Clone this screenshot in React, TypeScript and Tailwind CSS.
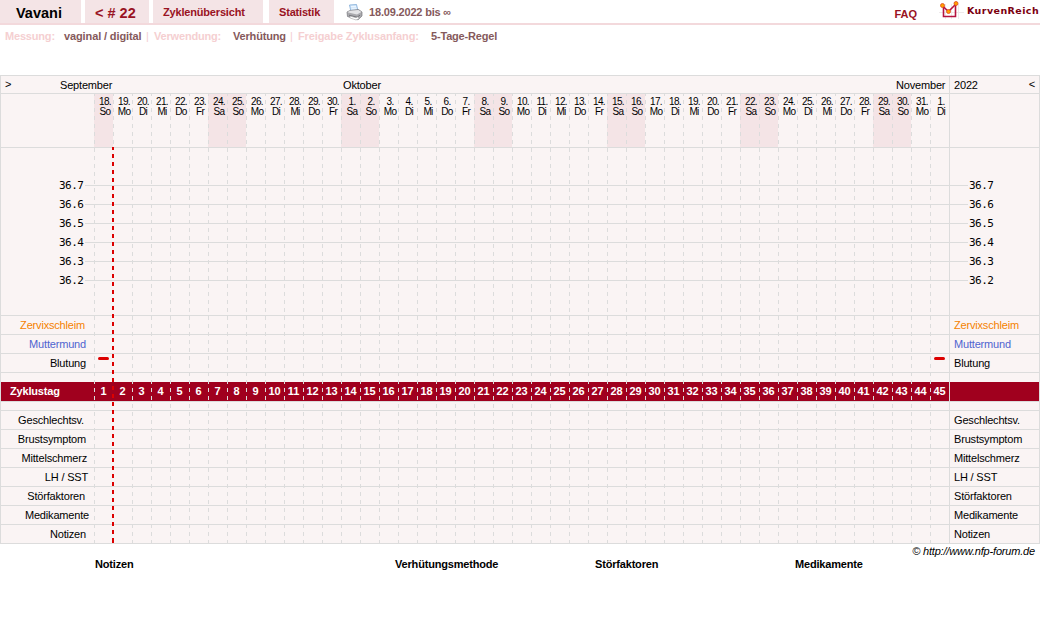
import React from "react";

const days: [string, string][] = [];
const names = ["So", "Mo", "Di", "Mi", "Do", "Fr", "Sa"];
for (let i = 0; i < 45; i++) {
  const d = i < 13 ? 18 + i : i < 44 ? i - 12 : 1;
  days.push([d + ".", names[i % 7]]);
}

const dash = "bg-[linear-gradient(to_bottom,#dcdcdc_4px,transparent_4px)] bg-[length:1px_8px] bg-repeat-y";

type Label = { text: string; right: string; phase: string; color?: string };

// The second column starts at the temperature shift line, so it has no grey divider.
function Cells({ phase }: { phase: string }) {
  return (
    <>
      {days.map((_, i) => (
        <div key={i} className={`w-[19px] shrink-0 ${i === 1 ? "" : dash} ${phase}`} />
      ))}
    </>
  );
}

function Row({ label }: { label: Label }) {
  const bleed = label.text === "Blutung";
  return (
    <div className="flex h-[19px] border-b border-[#dcdcdc]">
      <div className={`w-[93px] shrink-0 text-right leading-[19px] ${label.right} ${label.color ?? ""}`}>{label.text}</div>
      {days.map((_, i) => (
        <div key={i} className={`w-[19px] shrink-0 pl-1 pt-[3px] ${i === 1 ? "" : dash} ${label.phase}`}>
          {bleed && (i === 0 || i === 44) && <div className="h-[3px] w-[11px] rounded-[2px] bg-[#dc0000]" />}
        </div>
      ))}
      <div className={`w-[90px] border-l border-[#dcdcdc] pl-1 leading-[19px] ${label.color ?? ""}`}>{label.text}</div>
    </div>
  );
}

const symptoms: Label[] = [
  { text: "Zervixschleim", right: "pr-[9px]", color: "text-[#f58200]", phase: "bg-[position:0_0px]" },
  { text: "Muttermund", right: "pr-[8px]", color: "text-[#5064d0]", phase: "bg-[position:0_5px]" },
  { text: "Blutung", right: "pr-[8px]", phase: "bg-[position:0_2px]" },
];
const lower: Label[] = [
  { text: "Geschlechtsv.", right: "pr-[10px]", phase: "bg-[position:0_1px]" },
  { text: "Brustsymptom", right: "pr-[8px]", phase: "bg-[position:0_6px]" },
  { text: "Mittelschmerz", right: "pr-[7px]", phase: "bg-[position:0_3px]" },
  { text: "LH / SST", right: "pr-[6px]", phase: "bg-[position:0_0px]" },
  { text: "Störfaktoren", right: "pr-[9px]", phase: "bg-[position:0_5px]" },
  { text: "Medikamente", right: "pr-[5px]", phase: "bg-[position:0_2px]" },
  { text: "Notizen", right: "pr-[8px]", phase: "bg-[position:0_7px]" },
];
const temps = ["36.7", "36.6", "36.5", "36.4", "36.3", "36.2"];

function Printer() {
  return (
    <svg className="ml-[12px] mt-1 h-[17px] w-[17px] shrink-0" viewBox="0 0 17 17">
      <path d="M3.500 1 10.500 0.500 12 7 5 8Z" fill="#d3e8fb" stroke="#7fa9d6" strokeWidth=".8" />
      <path d="M5 2.500h5M5.500 4.300h5" stroke="#edf6ff" />
      <path d="M1 8 4 6.500 12.500 5.500 16 8v4l-4 3.800L1.500 12.500Z" fill="#a9a9ad" stroke="#77777c" strokeWidth=".7" />
      <path d="M1.300 8.200 4 6.800 12.300 6 15.400 8 11 10.500Z" fill="#e4e4e6" />
      <path d="m3 11.200 8 2 3-2" fill="none" stroke="#66666a" strokeWidth=".8" />
      <path d="m4 12 6 1.700 2-1 1 2-3 1.300-6-2Z" fill="#fff" stroke="#999" strokeWidth=".5" />
    </svg>
  );
}

function Logo() {
  return (
    <svg className="h-[20px] w-[25px] shrink-0" viewBox="0 0 25 20">
      <path d="M0 12.500h25M6.500 4v15M12.500 4v15M19.500 4v15" stroke="#eeeaeb" />
      <path d="M4.500 6v10.500h12V5" fill="none" stroke="#b5123f" strokeWidth="1.600" />
      <path d="m3.500 6 6 5.500L17 4" fill="none" stroke="#b5123f" strokeWidth="1.600" />
      <circle cx="3.500" cy="5.500" r="2" fill="#ffa000" stroke="#e0481a" strokeWidth=".8" />
      <circle cx="9.500" cy="11.500" r="2" fill="#ffa000" stroke="#e0481a" strokeWidth=".8" />
      <circle cx="17" cy="3.500" r="2" fill="#ffa000" stroke="#e0481a" strokeWidth=".8" />
    </svg>
  );
}

export default function App() {
  return (
    <div className="h-[623px] w-[1040px] overflow-hidden whitespace-nowrap bg-white font-['Liberation_Sans',Arial,sans-serif] text-[11px] tracking-[-0.18px] text-black">
      <header className="flex h-[25px] border-b-2 border-[#f3d9dc] font-bold text-[#991323]">
        <div className="h-[23px] w-[81px] bg-[#f4e4e6] pl-4 text-[14.5px] leading-[26px] tracking-normal text-black">Vavani</div>
        <div className="ml-1 h-[23px] w-16 bg-[#f4e4e6] pl-[10px] text-[14.5px] leading-[26px] tracking-normal">&lt; # 22</div>
        <div className="ml-1 h-[23px] w-[110px] bg-[#f4e4e6] pl-[10px] leading-[25px]">Zyklenübersicht</div>
        <div className="ml-[6px] h-[23px] w-[65px] bg-[#f4e4e6] pl-[10px] leading-[25px]">Statistik</div>
        <Printer />
        <div className="ml-[6px] leading-[25px] tracking-[-0.18px] text-[#85595b]">18.09.2022 bis ∞</div>
        <div className="ml-auto mr-[22px] leading-[28px] tracking-normal">FAQ</div>
        <Logo />
        <div className="ml-[3px] w-[73px] font-['DejaVu_Sans',sans-serif] text-[9.5px] leading-[21px] tracking-[0.42px] text-[#7b0010]">KurvenReich</div>
      </header>
      <div className="flex h-[50px] pl-[5px] pt-[5px] font-bold leading-[13px] text-[#f5cfd1]">
        <span className="w-[59px]">Messung:</span>
        <span className="w-[82px] tracking-[-0.12px] text-[#85595b]">vaginal / digital</span>
        <span className="w-[8px] font-normal">|</span>
        <span className="w-[79px]">Verwendung:</span>
        <span className="w-[57px] text-[#85595b]">Verhütung</span>
        <span className="w-[8px] font-normal">|</span>
        <span className="w-[133px] tracking-[-0.12px]">Freigabe Zyklusanfang:</span>
        <span className="text-[#85595b]">5-Tage-Regel</span>
      </div>

      <main className="relative h-[469px] border border-[#dcdcdc] bg-[#faf4f4]">
        <div className="flex h-[18px] border-b border-[#dcdcdc] leading-[19px]">
          <div className="w-[59px] pl-1 leading-[16px]">&gt;</div>
          <div className="w-[283px]">September</div>
          <div className="w-[553px]">Oktober</div>
          <div className="w-[53px]">November</div>
          <div className="flex w-[90px] justify-between border-l border-[#dcdcdc] pl-1 pr-1">
            <span>2022</span>
            <span className="leading-[16px]">&lt;</span>
          </div>
        </div>

        <div className="flex h-[54px] border-b border-[#dcdcdc]">
          <div className="w-[93px] shrink-0" />
          {days.map(([d, n], i) => (
            <div key={i} className={`flex w-[19px] shrink-0 flex-col items-center pl-[3px] pt-[3px] text-[10px] leading-[10px] tracking-[-0.7px] ${dash} bg-[position:0_6px] ${n === "Sa" || n === "So" ? "bg-[#f4e4e6]" : ""}`}>
              <div>{d}</div>
              <div>{n}</div>
            </div>
          ))}
          <div className="w-[90px] border-l border-[#dcdcdc]" />
        </div>

        <div className="flex h-[168px] border-b border-[#dcdcdc]">
          <div className="w-[93px] shrink-0 pt-[28px] font-['DejaVu_Sans_Mono',monospace]">
            {temps.map((t) => (
              <div key={t} className="flex h-[19px] items-center pl-[58px] leading-[19px] tracking-[-0.5px]">
                <span className="w-[26px]">{t}</span>
                <span className="h-px flex-1 bg-[#dcdcdc]" />
              </div>
            ))}
          </div>
          <div className="grid">
            <div className="col-start-1 row-start-1 pt-[37px]">
              {temps.map((t) => <div key={t} className="h-[19px] border-t border-[#dcdcdc]" />)}
            </div>
            <div className="col-start-1 row-start-1 flex">
              <Cells phase="bg-[position:0_0px]" />
            </div>
          </div>
          <div className="w-[90px] border-l border-[#dcdcdc] pt-[28px] font-['DejaVu_Sans_Mono',monospace]">
            {temps.map((t) => (
              <div key={t} className="flex h-[19px] items-center leading-[19px] tracking-[-0.5px]">
                <span className="mr-[1px] h-px w-[18px] bg-[#dcdcdc]" />
                <span>{t}</span>
              </div>
            ))}
          </div>
        </div>

        {symptoms.map((l) => <Row key={l.text} label={l} />)}
        <div className="flex h-[9px]">
          <div className="w-[93px] shrink-0" />
          <Cells phase="bg-[position:0_7px]" />
          <div className="w-[90px] border-l border-[#dcdcdc]" />
        </div>
        <div className="flex h-5 border-b border-[#dcdcdc] bg-[#a0001e] font-bold leading-[19px] text-white">
          <div className="w-[93px] shrink-0 pl-[9px]">Zyklustag</div>
          {days.map((_, i) => (
            <div key={i} className={`w-[19px] shrink-0 text-center ${i === 1 ? "" : dash} bg-[position:0_6px]`}>{i + 1}</div>
          ))}
          <div className="w-[90px] border-l border-[#dcdcdc]" />
        </div>
        <div className="flex h-[9px] border-b border-[#dcdcdc]">
          <div className="w-[93px] shrink-0" />
          <Cells phase="bg-[position:0_2px]" />
          <div className="w-[90px] border-l border-[#dcdcdc]" />
        </div>
        {lower.map((l) => <Row key={l.text} label={l} />)}

        <div className="absolute left-[111px] top-[71px] h-[396px] w-[2px] bg-[repeating-linear-gradient(to_bottom,#dc0000_0_4px,transparent_4px_8px)] bg-[position:0_-1px]" />
      </main>

      <div className="h-[14px] pr-[5px] text-right italic leading-[15px]">© http://www.nfp-forum.de</div>
      <footer className="flex pl-[95px] font-bold leading-[13px]">
        <div className="w-[300px]">Notizen</div>
        <div className="w-[200px]">Verhütungsmethode</div>
        <div className="w-[200px]">Störfaktoren</div>
        <div>Medikamente</div>
      </footer>
    </div>
  );
}
